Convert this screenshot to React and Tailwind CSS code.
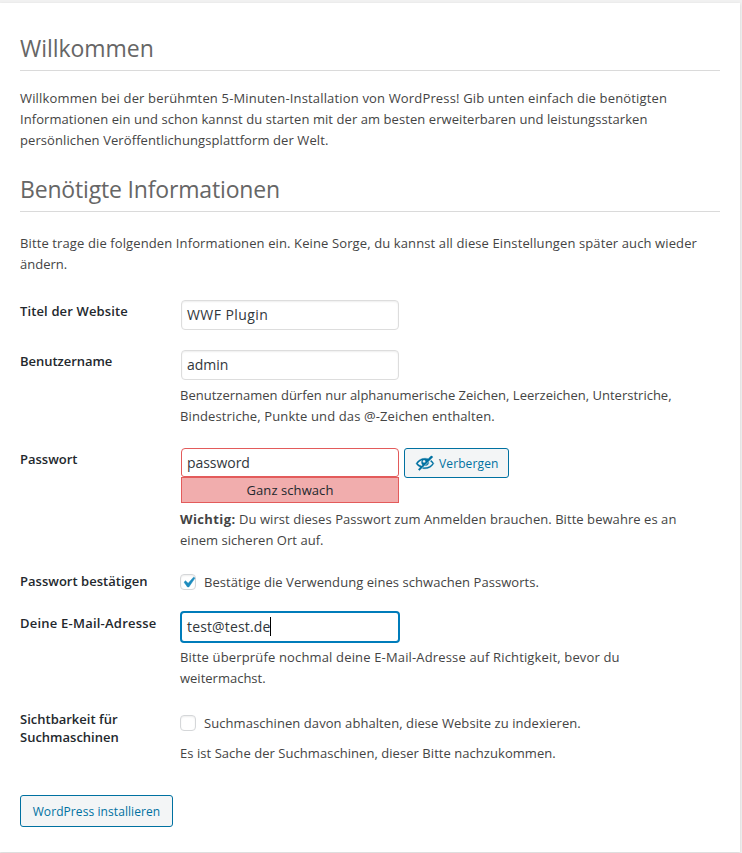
function Line({ className = "", children }) {
  return <span className={`block whitespace-nowrap ${className}`}>{children}</span>;
}

function Heading({ className = "", children }) {
  return (
    <h1 className={`border-b border-[#dadada] text-[23px] leading-8 font-normal text-[#666] ${className}`}>
      {children}
    </h1>
  );
}

function Row({ label, className = "", labelClass = "", children }) {
  return (
    <div className={`flex ${className}`}>
      <div className={`w-40 shrink-0 text-[13px] leading-[18px] font-semibold text-[#23282d] ${labelClass}`}>
        {label}
      </div>
      <div className="min-w-0 flex-1">{children}</div>
    </div>
  );
}

function TextBox({ className = "", children }) {
  return (
    <div className="ml-px flex h-[30px] w-[218px] items-center rounded-[4px] border border-[#ddd] bg-white pb-[2px] pl-[5px] text-[14px] text-[#32373c] shadow-[inset_0_1px_2px_rgba(0,0,0,0.07)]">
      <span className={`whitespace-nowrap ${className}`}>{children}</span>
    </div>
  );
}

function Checkbox({ checked }) {
  return (
    <span className="flex size-4 shrink-0 items-center justify-center rounded-[4px] border border-[#d5d7d9] bg-white shadow-[inset_0_1px_2px_rgba(0,0,0,0.07)]">
      {checked && (
        <svg viewBox="0 0 20 20" className="size-[21px] shrink-0" fill="#1e8cbe" stroke="#1e8cbe" strokeWidth="0.5">
          <path d="M14.83 4.89l1.34.94-5.81 8.38H9.02L5.78 9.67l1.34-1.25 2.57 2.4z" />
        </svg>
      )}
    </span>
  );
}

function HiddenIcon() {
  return (
    <svg viewBox="0 0 20 20" className="size-5 shrink-0" fill="#0071a1" stroke="#0071a1" strokeWidth="0.3">
      <path d="M17.2 3.3l.8.8L4.5 17.6l-1.3-1.2 2.1-2.1C3.5 13.500 2 12.200 1 10.500 2.800 7.200 6.200 5.200 10 5.200c1.100 0 2.200.2 3.200.5l2.500-2.500c.4-.4 1.100-.4 1.500.1zM6.700 12.900l.9-.9C6.200 10.600 6.100 8.400 7.200 6.900 5.300 7.600 3.700 8.900 2.600 10.600c1 1.200 2.400 1.900 4.100 2.300zM10.100 9.400c.6-.6.6-1.500 0-2-.6-.6-1.500-.6-2.100 0-.5.500-.5 1.400 0 2 .6.500 1.500.5 2.100 0zM18.900 10.500c-1.800 3.300-5.300 5.300-9 5.300-.9 0-1.700-.1-2.500-.3l1-1c.5.1 1 .1 1.500.1 3.100 0 6-1.500 7.700-4.100-.6-.9-1.400-1.700-2.300-2.300l.9-.9c1.100.8 2.100 1.900 2.700 3.200zM10.200 12.700l3.600-3.600c.3 2-1.400 3.900-3.600 3.600z" />
    </svg>
  );
}

export default function App() {
  return (
    <div className="h-[853px] w-[742px] overflow-hidden bg-[#f1f1f1] pt-[3px] font-['Open_Sans','Noto_Sans',sans-serif] text-[13px] leading-[21px] text-[#444]">
      <main className="h-[849px] w-[740px] bg-white px-5 pt-[29px] shadow-[0_1px_3px_rgba(0,0,0,0.13)]">
        <Heading className="h-[39px] tracking-[-0.05px]">Willkommen</Heading>

        <p className="mt-[17px]">
          <Line className="tracking-[0.16px]">
            Willkommen bei der berühmten 5-Minuten-Installation von WordPress! Gib unten einfach die benötigten
          </Line>
          <Line className="tracking-[0.07px]">
            Informationen ein und schon kannst du starten mit der am besten erweiterbaren und leistungsstarken
          </Line>
          <Line className="tracking-[0.09px]">persönlichen Veröffentlichungsplattform der Welt.</Line>
        </p>

        <Heading className="mt-[22px] h-[39px] tracking-[-0.17px]">Benötigte Informationen</Heading>

        <p className="mt-[21px]">
          <Line className="tracking-[0.115px]">
            Bitte trage die folgenden Informationen ein. Keine Sorge, du kannst all diese Einstellungen später auch wieder
          </Line>
          <Line>ändern.</Line>
        </p>

        <Row
          className="mt-[25px] h-[50px]"
          labelClass="pt-[2px]"
          label={<Line className="tracking-[0.13px]">Titel der Website</Line>}
        >
          <TextBox className="tracking-[0.42px]">WWF Plugin</TextBox>
        </Row>

        <Row className="h-[98px]" labelClass="pt-[2px]" label={<Line className="tracking-[-0.04px]">Benutzername</Line>}>
          <TextBox>admin</TextBox>
          <p className="mt-[5px]">
            <Line className="tracking-[0.005px]">
              Benutzernamen dürfen nur alphanumerische Zeichen, Leerzeichen, Unterstriche,
            </Line>
            <Line className="tracking-[0.12px]">Bindestriche, Punkte und das @-Zeichen enthalten.</Line>
          </p>
        </Row>

        <Row className="h-[124px]" labelClass="pt-[2px]" label={<Line>Passwort</Line>}>
          <div className="flex items-start">
            <div className="ml-px w-[218px]">
              <div className="flex h-[29px] items-center rounded-t-[4px] rounded-b-[3px] border border-[#e35b5b] bg-white pl-[5px] text-[14px] tracking-[-0.05px] text-[#32373c]">
                password
              </div>
              <div className="h-[26px] border border-[#e35b5b] bg-[#f1adad] text-center leading-[25px] tracking-[0.08px] text-[#23282d]">
                Ganz schwach
              </div>
            </div>
            <button className="ml-[5px] flex h-[30px] w-[105px] items-center rounded-[3px] border border-[#0071a1] bg-[#f3f5f6] pl-[10px] text-[12px] tracking-[0.12px] text-[#0071a1]">
              <HiddenIcon />
              <span className="ml-1">Verbergen</span>
            </button>
          </div>
          <div className="mt-[6px]">
            <div className="flex whitespace-nowrap">
              <strong className="w-[59px] font-bold tracking-[0.38px]">Wichtig:</strong>
              <span className="tracking-[0.055px]">
                Du wirst dieses Passwort zum Anmelden brauchen. Bitte bewahre es an
              </span>
            </div>
            <Line className="tracking-[0.04px]">einem sicheren Ort auf.</Line>
          </div>
        </Row>

        <Row className="h-[39px]" label={<Line className="tracking-[0.02px]">Passwort bestätigen</Line>}>
          <label className="flex h-5 items-center gap-2">
            <Checkbox checked />
            <Line className="tracking-[0.055px]">Bestätige die Verwendung eines schwachen Passworts.</Line>
          </label>
        </Row>

        <Row
          className="h-[99px]"
          labelClass="pt-[3px]"
          label={<Line className="tracking-[0.22px]">Deine E-Mail-Adresse</Line>}
        >
          <div className="flex h-8 w-[220px] items-center rounded-[4px] border-2 border-[#007cba] bg-white pb-px pl-[5px] text-[14px] text-[#32373c]">
            <span className="tracking-[0.15px]">test@test.de</span>
            <span className="h-[19px] w-px bg-black" />
          </div>
          <p className="mt-1">
            <Line className="tracking-[0.155px]">
              Bitte überprüfe nochmal deine E-Mail-Adresse auf Richtigkeit, bevor du
            </Line>
            <Line>weitermachst.</Line>
          </p>
        </Row>

        <Row
          className="h-[85px]"
          label={
            <>
              <Line>Sichtbarkeit für</Line>
              <Line>Suchmaschinen</Line>
            </>
          }
        >
          <label className="mt-[3px] flex h-5 items-center gap-2">
            <Checkbox />
            <Line className="tracking-[0.07px]">Suchmaschinen davon abhalten, diese Website zu indexieren.</Line>
          </label>
          <p className="mt-[10px]">
            <Line className="tracking-[0.05px]">Es ist Sache der Suchmaschinen, dieser Bitte nachzukommen.</Line>
          </p>
        </Row>

        <button className="block h-8 w-[153px] rounded-[3px] border border-[#0071a1] bg-[#f3f5f6] text-center text-[12px] tracking-[0.08px] whitespace-nowrap text-[#0071a1]">
          WordPress installieren
        </button>
      </main>
    </div>
  );
}
